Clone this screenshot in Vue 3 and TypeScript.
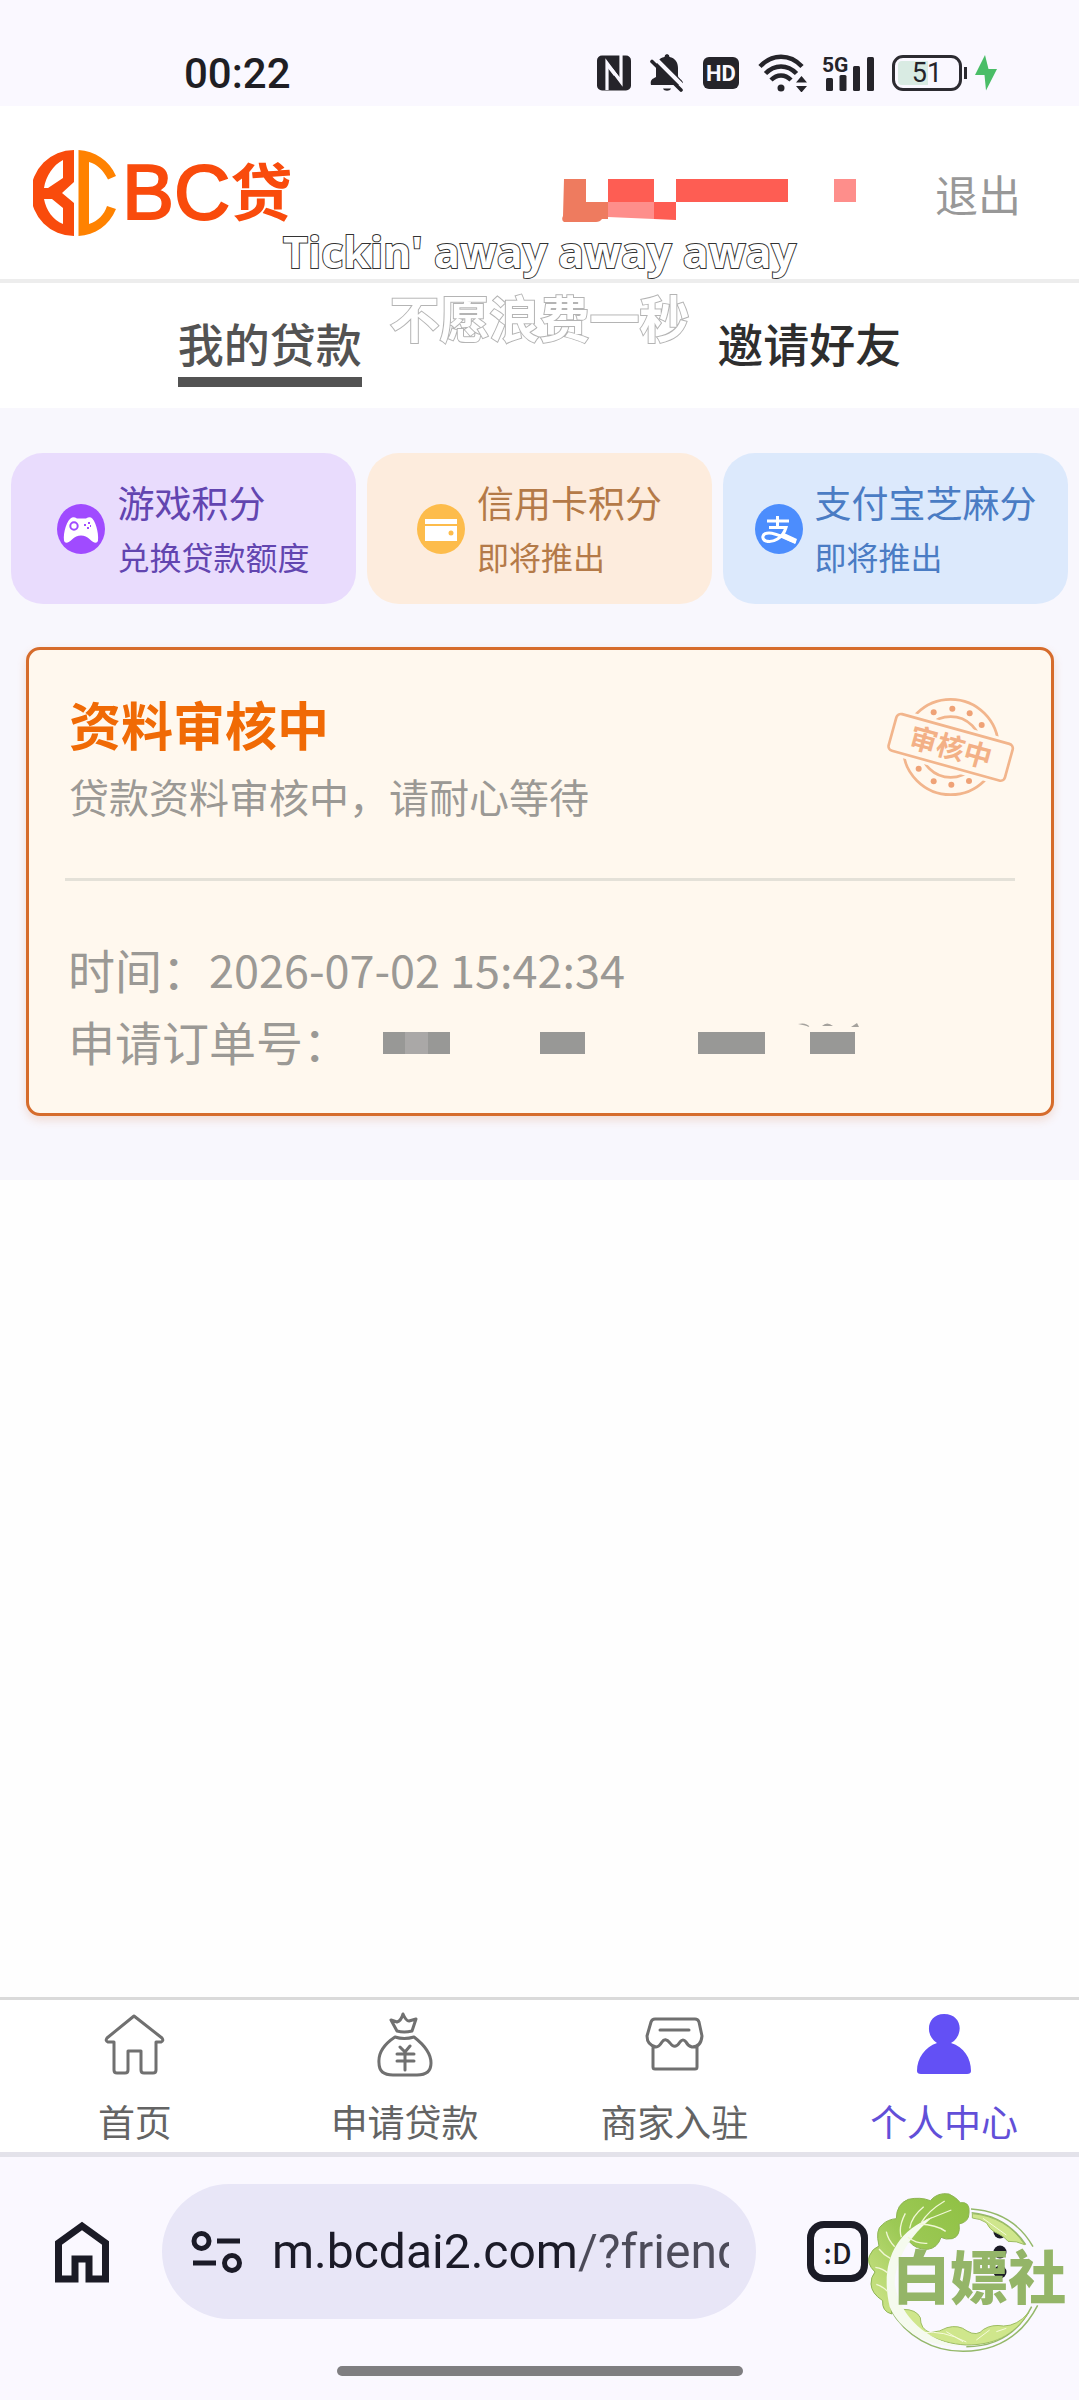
<script setup lang="ts">
import { ref } from 'vue'

interface PointCard {
  id: string
  title: string
  note: string
  tone: string
}

interface NavItem {
  id: string
  label: string
}

const pointCards: PointCard[] = [
  { id: 'game', title: '游戏积分', note: '兑换贷款额度', tone: 'purple' },
  { id: 'credit', title: '信用卡积分', note: '即将推出', tone: 'orange' },
  { id: 'alipay', title: '支付宝芝麻分', note: '即将推出', tone: 'blue' },
]

const navItems: NavItem[] = [
  { id: 'home', label: '首页' },
  { id: 'apply', label: '申请贷款' },
  { id: 'shop', label: '商家入驻' },
  { id: 'me', label: '个人中心' },
]

const activeNav = ref('me')
const activeTab = ref('loans')
const url = ref('m.bcdai2.com/?friend')
</script>

<template>
  <div class="page">
    <div class="status">
      <time class="clock">00:22</time>
      <div class="status-icons">
        <svg width="34" height="36" viewBox="0 0 34 36" class="nfc">
          <rect y="0.5" width="34" height="35" rx="5" fill="#25242a" />
          <path d="M10 35V8L24 27V0" fill="none" stroke="#faf8ff" stroke-width="3.2" />
          <path d="M10 7l7 8v6l-7-9zM24 28l-7-8v-5l7 9z" fill="#faf8ff" />
        </svg>
        <svg width="34" height="38" viewBox="0 0 34 38" class="bell">
          <path d="M17 0a3 3 0 0 1 2.500 3C25 4 28 8.500 28 14v8c0 2 5 4 5 7v2H1c-1-5 1-6 5-8v-9C6 8.500 9 4 14.500 3A3 3 0 0 1 17 0z" fill="#25242a" />
          <path d="M13 34.500h8c-1 3-7 3-8 0z" fill="#25242a" />
          <path d="M3 2 34 33" stroke="#faf8ff" stroke-width="4" />
          <path d="M2 7.500 31 36" stroke="#25242a" stroke-width="3.600" stroke-linecap="round" />
        </svg>
        <span class="hd">HD</span>
        <svg width="50" height="38" viewBox="0 0 50 38" class="wifi">
          <g fill="none" stroke="#25242a" stroke-width="4.500">
            <path d="M2 12.500C14-.5 32-.5 44 12.500" />
            <path d="M7.500 19.500c9-9.500 22-9.500 31 0" />
            <path d="M13 26c6-6 14-6 20 0" />
          </g>
          <circle cx="23" cy="34" r="3.500" fill="#25242a" />
          <path d="M38 28.500l5.500-6.500 5.500 6.500zM38 32l5.500 6.500L49 32z" fill="#25242a" />
        </svg>
        <svg width="53" height="38" viewBox="0 0 53 38" class="signal">
          <text x="0" y="18" class="net">5G</text>
          <g fill="#25242a">
            <rect x="4" y="24" width="7" height="13" rx="1.500" />
            <rect x="17.500" y="21" width="7" height="16" rx="1.500" />
            <rect x="31" y="12" width="7" height="25" rx="1.500" />
            <rect x="45" y="3" width="7" height="34" rx="1.500" />
          </g>
        </svg>
        <span class="battery"><span class="charge"></span><span class="level">51</span></span>
        <svg width="22" height="36" viewBox="0 0 22 36" class="bolt">
          <path d="M10 0 0 20h9.500l1.500 15.500L22 14H13.500z" fill="#4abd67" />
        </svg>
      </div>
    </div>

    <header class="header">
      <h1 class="brand">
        <svg width="84" height="86" viewBox="0 0 84 86">
          <path d="M41 0A43 43 0 0 0 41 86V53L29 43 41 32zM30 10V28L15 38H11C13 26 20 15 30 10zM11 49h8L30 58V74C20 70 13 60 11 49z" fill="#f94b0c" fill-rule="evenodd" />
          <path d="M45.500 0C62 1 76 10 83 26l-8 3.500C70 20 64 14 56 12V74c9-3 15-9 18-18l9 3C76 76 62 85 45.500 86z" fill="#ff8200" />
        </svg>
        <span class="brand-latin">BC</span><span class="brand-han">贷</span>
      </h1>
      <svg class="masked-phone" width="294" height="44" viewBox="0 0 294 44">
        <path d="M2 1h22v23h22v17H40q-2 3-6 3H2q-3-2-1-6z" fill="#ee7b5f" />
        <path d="M46 1h46v23H46zM92 24h22v18l-22-1zM114 1h112v23H114z" fill="#fe5d53" />
        <path d="M46 24h46v17l-46-2zM272 1h22v23h-22z" fill="#fe8e8b" />
      </svg>
      <a href="#logout" class="logout">退出</a>
    </header>

    <nav class="tabs">
      <a href="#loans" class="tab" :class="{ on: activeTab === 'loans' }" @click.prevent="activeTab = 'loans'"><span>我的贷款</span></a>
      <a href="#invite" class="tab" :class="{ on: activeTab === 'invite' }" @click.prevent="activeTab = 'invite'"><span>邀请好友</span></a>
    </nav>

    <main class="content">
      <section class="points">
        <button v-for="card in pointCards" :key="card.id" type="button" class="point" :class="card.tone">
          <svg v-if="card.id === 'game'" width="48" height="50" viewBox="0 0 48 50">
            <ellipse cx="24" cy="25" rx="24" ry="25" fill="#a04bff" />
            <path d="M15 13.500q2-1 5 1h9q3-2 5-1c4 2 8 15 7 23-1 4-5 2-8-1q-4-4-9-4t-9 4c-3 3-7 5-8 1-1-8 3-21 8-23z" fill="#fff" />
            <circle cx="17" cy="22" r="3.700" fill="none" stroke="#a04bff" stroke-width="2" />
            <path d="M27 21h2m1 3h2m-1-5h2m0 3h1" stroke="#a04bff" stroke-width="2.200" />
          </svg>
          <svg v-else-if="card.id === 'credit'" width="48" height="50" viewBox="0 0 48 50">
            <ellipse cx="24" cy="25" rx="24" ry="25" fill="#fdbc4b" />
            <path d="M8 15h32v5H8zM8 22h32v15H8z" fill="#fff" />
            <circle cx="34" cy="29" r="2.500" fill="#fdbc4b" />
          </svg>
          <svg v-else width="48" height="50" viewBox="0 0 48 50">
            <ellipse cx="24" cy="25" rx="24" ry="25" fill="#4c8dfd" />
            <path d="M12 17h22M22.500 12v10M14 23.500h17C28 34 18 39 11 37c-5-2-4-8 3-8 8 0 17 6 27 9" fill="none" stroke="#fff" stroke-width="3" />
            <path d="M29 29l13 6-2 5-14-7z" fill="#fff" />
          </svg>
          <span class="point-text">
            <span class="point-title">{{ card.title }}</span>
            <span class="point-note">{{ card.note }}</span>
          </span>
        </button>
      </section>

      <article class="order">
        <div class="order-head">
          <div>
            <h2>资料审核中</h2>
            <p>贷款资料审核中，请耐心等待</p>
          </div>
          <svg class="stamp" width="129" height="98" viewBox="138 172 387 294">
            <g fill="none" stroke="#f2b58c" stroke-width="8">
              <circle cx="332" cy="319" r="143" />
              <circle cx="332" cy="319" r="91" />
            </g>
            <g fill="#efa276">
              <circle cx="281" cy="215" r="9" /><circle cx="337" cy="204" r="9" />
              <circle cx="389" cy="218" r="9" /><circle cx="425" cy="253" r="9" />
              <circle cx="236" cy="384" r="9" /><circle cx="281" cy="422" r="9" />
              <circle cx="334" cy="432" r="9" /><circle cx="387" cy="421" r="9" />
            </g>
            <g transform="rotate(15.500 332 320)">
              <rect x="136" y="250" width="392" height="140" fill="#fff8ee" />
              <rect x="151" y="263" width="362" height="114" rx="14" fill="#fff8ee" stroke="#f2b58c" stroke-width="8" />
              <text x="332" y="351" text-anchor="middle" class="stamp-text">审核中</text>
            </g>
          </svg>
        </div>
        <hr />
        <dl>
          <div>
            <dt>时间：</dt>
            <dd class="when">2026-07-02 15:42:34</dd>
          </div>
          <div>
            <dt>申请订单号：</dt>
            <dd class="masked">
              <svg width="480" height="34" viewBox="0 0 480 34">
                <path d="M3 10h67v22H3zM160 10h45v22h-45zM318 10h67v22h-67zM430 10h45v22h-45z" fill="#989896" />
                <path d="M25 10h23v22H25z" fill="#aaa8a7" />
                <path d="M418 2q8-2 12 3-6-2-12-3zM442 4q5-5 11 0zM471 5l6-4 2 4z" fill="#a5a29d" />
              </svg>
            </dd>
          </div>
        </dl>
      </article>
    </main>

    <nav class="bottom-nav">
      <a v-for="item in navItems" :key="item.id" :href="'#' + item.id" class="nav-item" :class="{ on: item.id === activeNav }" @click.prevent="activeNav = item.id">
        <svg v-if="item.id === 'home'" width="64" height="66" viewBox="0 0 64 66" class="line">
          <path d="M31 4 4 26q-2 3 1 4h6v28q0 3 3 3h8q3 0 3-3V39h13v19q0 3 3 3h9q3 0 3-3V30h5q3-1 1-4z" />
        </svg>
        <svg v-else-if="item.id === 'apply'" width="64" height="66" viewBox="0 0 64 66" class="line">
          <path d="M18 8l6 2q4-1 6-8 3 7 6 7l7-2-4 12q-8 2-15 0zM22 25q9 3 19 0c9 7 17 16 17 26q0 12-14 12H20Q6 63 6 51C5 40 13 31 22 25zM24 42h17M24 49h17M32 41v17M27 35l5 5 5-6" />
        </svg>
        <svg v-else-if="item.id === 'shop'" width="64" height="66" viewBox="0 0 64 66" class="line">
          <path d="M13 7H53Q56 7 57 10L60 24Q59 35 50 35 46 34 44 30 41 26 38 30 33 38 28 31 23 25 20 30 17 35 14 35 5 33 5 24L9 10Q10 7 13 7zM11 35v20q0 2 2 2h40q2 0 2-2V35M18 18h29" />
        </svg>
        <svg v-else width="64" height="66" viewBox="0 0 64 66">
          <path d="M32 2c19 0 20 22 7 29 13 4 20 15 20 28q0 3-4 3H9q-4 0-4-3c0-13 8-24 20-28C12 23 15 2 32 2z" fill="#6350f5" />
        </svg>
        <span>{{ item.label }}</span>
      </a>
    </nav>

    <footer class="browser">
      <div class="toolbar">
        <button type="button" class="tool" aria-label="主页">
          <svg width="54" height="62" viewBox="0 0 54 62">
            <path d="M3.500 58V22L27 5l23.500 17v36H34V38H20v20z" fill="none" stroke="#1b1b26" stroke-width="7" />
          </svg>
        </button>
        <div class="address">
          <svg width="52" height="44" viewBox="0 0 52 44" fill="none" stroke="#1b1b28">
            <circle cx="10.500" cy="11" r="7.500" stroke-width="5" />
            <circle cx="41" cy="33" r="7.500" stroke-width="5" />
            <path d="M26 11h23M2 33h23" stroke-width="5" />
          </svg>
          <input v-model="url" type="text" aria-label="网址" />
        </div>
        <button type="button" class="tool tabs-count" aria-label="标签页">:D</button>
        <button type="button" class="tool more" aria-label="更多">
          <svg width="14" height="54" viewBox="0 0 14 54" fill="#1b1b26">
            <circle cx="7" cy="7" r="6.500" /><circle cx="7" cy="27" r="6.500" /><circle cx="7" cy="47" r="6.500" />
          </svg>
        </button>
      </div>
      <div class="gesture"></div>

      <svg class="badge" width="204" height="164" viewBox="262 120 612 492">
        <defs>
          <linearGradient id="leaf" x1="1" y1="0" x2="0" y2="1">
            <stop offset="0" stop-color="#8fc043" />
            <stop offset="0.500" stop-color="#9cc955" />
            <stop offset="1" stop-color="#d3e88e" />
          </linearGradient>
        </defs>
        <path d="M574 177Q700 185 760 290M576 188Q680 198 738 284M774 466C720 570 640 604 550 604 460 604 380 560 332 478M756 470C710 560 640 590 560 590" fill="none" stroke="#94b86a" stroke-width="4.500" />
        <path d="M578 191Q680 200 735 284q-25-12-50-10-10-14-40-28-15-8-25-28-18-12-42-14zM370 478q40 0 52 25 0 35 30 45 30-3 50-15 35-10 60 10 30 18 50-5 25-16 60-10 40 0 75-40C700 560 640 585 560 585 470 580 400 540 370 478z" fill="#cfe68c" stroke="#9dbd62" stroke-width="3" />
        <path d="M430 548q60-8 130 28M500 545l50 30M590 570l40-30M650 545l30-10M610 205l70 50" fill="none" stroke="#f6fbdc" stroke-width="3" />
        <path d="M336 492q-30-8-27-40-34-22-35-50-1-20 12-36-28-28-16-50 8-20 28-28-12-50 10-64 16-16 42-18 0-44 36-58 36-8 66 4 22-26 56-20 22 10 34 26 30-4 26 32 0 26-30 32 6 36-20 44-20 4-34-4-10 32-40 36-34 2-56-24-70 72-52 218z" fill="url(#leaf)" stroke="#8db452" stroke-width="3" />
        <path d="M330 470C304 360 330 250 460 200 390 260 350 320 345 400 360 500 440 570 540 588 440 592 360 540 330 470z" fill="#f5faee" />
        <path d="M365 262q-10-30 12-72M390 235q5-35 42-65M425 218q20-35 70-65M440 210q50-20 75-30M420 222q50 2 78 22M385 262q25 20 58 18M345 290q-20-20-25-45M332 325q-20-10-34-28M325 370q-15-15-38-18M325 425q-15-15-35-22" fill="none" stroke="#f0f7d4" stroke-width="4" />
        <text x="338" y="448" class="badge-text">白嫖社</text>
      </svg>
    </footer>

    <div class="lyrics">
      <p>Tickin' away away away</p>
      <p class="next">不愿浪费一秒</p>
    </div>
  </div>
</template>

<style>
body {
  margin: 0;
  background: #fefefe;
}
</style>

<style scoped>
.page {
  position: relative;
  display: flex;
  flex-direction: column;
  min-height: 100vh;
  font-family: "Noto Sans CJK SC", "Noto Sans", sans-serif;
  color: #2e2e2e;
}

h1, h2, p, dl, dd {
  margin: 0;
}

a {
  color: inherit;
  text-decoration: none;
}

button {
  border: 0;
  padding: 0;
  background: none;
  font: inherit;
  color: inherit;
}

svg {
  display: block;
  flex: none;
}

.status {
  display: flex;
  justify-content: space-between;
  align-items: center;
  box-sizing: border-box;
  height: 106px;
  padding: 40px 82px 0 184px;
  background: #faf8ff;
}

.clock {
  font-family: Roboto, sans-serif;
  font-size: 42px;
  font-weight: 500;
  color: #1f1e24;
}

.status-icons {
  display: flex;
  align-items: center;
  gap: 19px;
}

.hd {
  width: 36px;
  height: 32px;
  border-radius: 6px;
  background: #25242a;
  color: #faf8ff;
  font: 700 22px/33px Roboto, sans-serif;
  text-align: center;
}

.signal {
  margin: 0 -2px 0 -5px;
}

.net {
  font: 700 21px Roboto, sans-serif;
  fill: #25242a;
}

.battery {
  position: relative;
  box-sizing: border-box;
  width: 70px;
  height: 36px;
  margin-right: -8px;
  border: 3px solid #2c2b31;
  border-radius: 11px;
}

.battery::after {
  content: "";
  position: absolute;
  top: 9px;
  right: -8px;
  width: 3px;
  height: 12px;
  background: #2c2b31;
}

.charge {
  position: absolute;
  inset: 3px 31px 3px 3px;
  border-radius: 4px 0 0 4px;
  background: #d9ebe3;
}

.level {
  position: relative;
  display: block;
  font: 400 27px/30px Roboto, sans-serif;
  text-align: center;
  color: #25242a;
}

.bolt {
  margin-left: 2px;
}

.header {
  display: flex;
  align-items: center;
  box-sizing: border-box;
  height: 177px;
  padding: 0 58px 0 33px;
  border-bottom: 4px solid #ededed;
  background: #fff;
}

.brand {
  display: flex;
  align-items: flex-start;
  margin-right: auto;
  color: #f94b0c;
}

.brand-latin {
  margin-left: 5px;
  font: 400 78px/84px "Liberation Sans", sans-serif;
  -webkit-text-stroke: 2px #f94b0c;
}

.brand-han {
  font-size: 62px;
  line-height: 78px;
  font-weight: 700;
}

.masked-phone {
  margin: 15px 79px 0 0;
}

.logout {
  font-size: 43px;
  line-height: 60px;
  color: #989898;
}

.tabs {
  display: flex;
  height: 125px;
  background: #fff;
}

.tab {
  flex: 1;
  display: flex;
  justify-content: center;
  align-items: flex-start;
  padding-top: 24px;
  font-size: 46px;
  line-height: 70px;
  font-weight: 500;
}

.tab span {
  border-bottom: 10px solid transparent;
}

.tab.on span {
  color: #535353;
  border-color: #535353;
}

.content {
  padding: 45px 11px 64px;
  background: #f8f7fd;
}

.points {
  display: flex;
  gap: 11px;
}

.point {
  flex: 1 1 0;
  display: flex;
  justify-content: center;
  align-items: center;
  gap: 12px;
  height: 151px;
  border-radius: 32px;
  text-align: left;
  white-space: nowrap;
}

.purple {
  background: #e9dcfd;
  color: #6245b0;
}

.orange {
  background: #fdecdd;
  color: #b47a48;
}

.blue {
  background: #dce9fc;
  color: #4a7cc4;
}

.point-title,
.point-note {
  display: block;
  line-height: 54px;
}

.point-title {
  font-size: 37px;
}

.point-note {
  font-size: 32px;
}

.order {
  margin: 43px 14px 0 15px;
  padding: 38px 36px 36px;
  border: 3px solid #d66c2c;
  border-radius: 14px;
  background: #fff8ee;
  box-shadow: 0 4px 10px #d66c2c33;
  color: #9b9995;
}

.order-head {
  display: flex;
  justify-content: space-between;
  align-items: flex-start;
  padding-left: 4px;
}

.order h2 {
  font-size: 52px;
  line-height: 72px;
  font-weight: 700;
  color: #f06a05;
}

.order-head p {
  font-size: 40px;
  line-height: 72px;
}

.stamp {
  margin-top: 10px;
}

.stamp-text {
  font-size: 84px;
  font-weight: 700;
  fill: #f3b086;
}

.order hr {
  height: 3px;
  margin: 46px 0 52px;
  border: 0;
  background: #e4e1d8;
}

.order dl > div {
  display: flex;
  padding-left: 3px;
  font-size: 47px;
  line-height: 72px;
}

.when {
  font-size: 45px;
}

.masked {
  padding: 17px 0 0 30px;
}

.bottom-nav {
  display: flex;
  box-sizing: border-box;
  height: 160px;
  margin-top: auto;
  border-top: 3px solid #dadada;
  border-bottom: 5px solid #e3e2ea;
  background: #fff;
}

.nav-item {
  flex: 1;
  display: flex;
  flex-direction: column;
  align-items: center;
  gap: 16px;
  padding-top: 12px;
  font-size: 37px;
  line-height: 54px;
  color: #646464;
}

.nav-item.on {
  color: #624fd8;
}

.line {
  fill: none;
  stroke: #707070;
  stroke-width: 3;
  stroke-linejoin: round;
  stroke-linecap: round;
}

.browser {
  position: relative;
  background: #faf8ff;
}

.toolbar {
  display: flex;
  align-items: center;
  padding: 27px 72px 0 55px;
}

.tool {
  flex: none;
}

.address {
  flex: 1;
  display: flex;
  align-items: center;
  gap: 29px;
  box-sizing: border-box;
  min-width: 0;
  height: 135px;
  margin: 0 51px 0 53px;
  padding: 0 27px 0 29px;
  border-radius: 68px;
  background: #e8e6f7;
}

.address input {
  flex: 1;
  width: 0;
  min-width: 0;
  height: 60px;
  padding: 0;
  border: 0;
  outline: 0;
  font: 400 48px/60px Roboto, sans-serif;
  color: transparent;
  background: linear-gradient(to right, #1b1b28 306px, #4c4b59 306px);
  -webkit-background-clip: text;
  background-clip: text;
}

.tabs-count {
  box-sizing: border-box;
  width: 61px;
  height: 61px;
  border: 7px solid #1b1b26;
  border-radius: 17px;
  font-size: 28px;
  line-height: 46px;
  font-weight: 500;
  color: #1b1b26;
}

.more {
  margin-left: 125px;
}

.gesture {
  width: 406px;
  height: 10px;
  margin: 47px auto 24px;
  border-radius: 5px;
  background: #7f7e81;
}

.badge {
  position: absolute;
  top: 33px;
  right: 8px;
}

.badge-text {
  font-size: 174px;
  font-weight: 900;
  fill: #94b568;
}

.lyrics {
  position: absolute;
  top: 220px;
  left: 0;
  right: 0;
  text-align: center;
  color: #fff;
  font-size: 50px;
  line-height: 64px;
  font-weight: 700;
  pointer-events: none;
}

.lyrics p {
  -webkit-text-stroke: 2px #333;
  paint-order: stroke fill;
  font-family: "Open Sans", sans-serif;
  font-size: 43px;
}

.lyrics .next {
  font-family: "Noto Sans CJK SC", sans-serif;
  font-size: 50px;
  -webkit-text-stroke: 2px #b4b4b4;
}
</style>
